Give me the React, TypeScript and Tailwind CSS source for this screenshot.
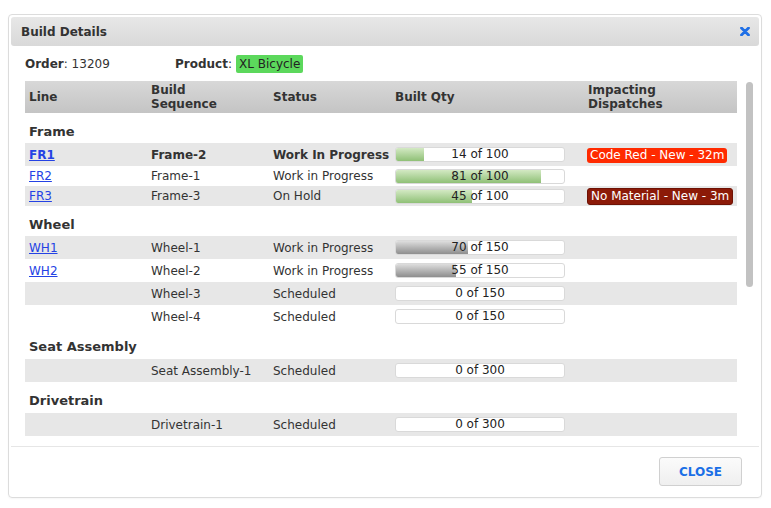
import React from "react";

type Row = {
  line?: string;
  seq: string;
  status: string;
  built: number;
  total: number;
  fill: number;
  tone: "green" | "gray";
  dispatch?: { text: string; kind: "red" | "dark" };
  bold?: boolean;
  h: string;
};

type Group = { name: string; rows: Row[] };

const groups: Group[] = [
  {
    name: "Frame",
    rows: [
      {
        line: "FR1",
        seq: "Frame-2",
        status: "Work In Progress",
        built: 14,
        total: 100,
        fill: 28,
        tone: "green",
        dispatch: { text: "Code Red - New - 32m", kind: "red" },
        bold: true,
        h: "h-[23px]",
      },
      { line: "FR2", seq: "Frame-1", status: "Work in Progress", built: 81, total: 100, fill: 145, tone: "green", h: "h-[20px]" },
      {
        line: "FR3",
        seq: "Frame-3",
        status: "On Hold",
        built: 45,
        total: 100,
        fill: 76,
        tone: "green",
        dispatch: { text: "No Material - New - 3m", kind: "dark" },
        h: "h-[20px]",
      },
    ],
  },
  {
    name: "Wheel",
    rows: [
      { line: "WH1", seq: "Wheel-1", status: "Work in Progress", built: 70, total: 150, fill: 72, tone: "gray", h: "h-[23px]" },
      { line: "WH2", seq: "Wheel-2", status: "Work in Progress", built: 55, total: 150, fill: 60, tone: "gray", h: "h-[23px]" },
      { seq: "Wheel-3", status: "Scheduled", built: 0, total: 150, fill: 0, tone: "gray", h: "h-[23px]" },
      { seq: "Wheel-4", status: "Scheduled", built: 0, total: 150, fill: 0, tone: "gray", h: "h-[23px]" },
    ],
  },
  {
    name: "Seat Assembly",
    rows: [{ seq: "Seat Assembly-1", status: "Scheduled", built: 0, total: 300, fill: 0, tone: "gray", h: "h-[23px]" }],
  },
  {
    name: "Drivetrain",
    rows: [{ seq: "Drivetrain-1", status: "Scheduled", built: 0, total: 300, fill: 0, tone: "gray", h: "h-[23px]" }],
  },
];

const cols = "grid grid-cols-[122px_122px_122px_193px_153px]";

function QtyBar({ row }: { row: Row }) {
  return (
    <div className="relative ml-[4px] h-[15px] w-[170px] overflow-hidden rounded-[3px] border border-[#d9d9d9] bg-white">
      {row.fill > 0 && (
        <div
          className={
            row.tone === "green"
              ? "absolute inset-y-0 left-0 bg-gradient-to-b from-[#d3e9c3] to-[#8fc076]"
              : "absolute inset-y-0 left-0 bg-gradient-to-b from-[#dedede] to-[#8e8e8e]"
          }
          style={{ width: row.fill }}
        />
      )}
      <div className="relative text-center text-[12px] leading-[13px] text-[#222]">
        {row.built} of {row.total}
      </div>
    </div>
  );
}

export default function App() {
  return (
    <div className="min-h-screen bg-white pl-[8px] pt-[14px] font-['DejaVu_Sans',sans-serif] text-[12px] text-[#333]">
      <div className="flex h-[484px] w-[754px] flex-col rounded-[4px] border border-[#dcdcdc] p-[2px] shadow-[0_1px_2px_rgba(0,0,0,0.04)]">
        <div className="flex h-[29px] shrink-0 items-center justify-between rounded-[3px] bg-gradient-to-b from-[#e7e7e7] to-[#d9d9d9] pl-[10px] pr-[9px]">
          <span className="font-bold text-[#333]">Build Details</span>
          <svg width="10" height="9" viewBox="0 0 10 9">
            <path d="M1.5 1 L8.5 8 M8.5 1 L1.5 8" stroke="#1f6fe6" strokeWidth="2.8" strokeLinecap="round" />
          </svg>
        </div>

        <div className="flex h-[35px] shrink-0 items-center pl-[14px]">
          <div className="w-[150px]">
            <b>Order</b>: 13209
          </div>
          <div className="flex items-center">
            <b>Product</b>:
            <span className="ml-[4px] rounded-[2px] bg-[#5cd85c] px-[3px] py-[2px] leading-[14px] text-[#222]">XL Bicycle</span>
          </div>
        </div>

        <div className="flex h-[365px] shrink-0 overflow-hidden pl-[14px]">
          <div className="w-[712px]">
            <div className={`${cols} h-[32px] items-center bg-gradient-to-b from-[#d8d8d8] to-[#c4c4c4] font-bold leading-[14px]`}>
              <div className="pl-[4px]">Line</div>
              <div className="pl-[4px]">
                Build
                <br />
                Sequence
              </div>
              <div className="pl-[4px]">Status</div>
              <div className="pl-[4px]">Built Qty</div>
              <div className="pl-[4px]">
                Impacting
                <br />
                Dispatches
              </div>
            </div>

            {groups.map((g, gi) => (
              <div key={g.name}>
                <div className={`${gi === 0 || gi === 1 ? "h-[30px]" : "h-[31px]"} pl-[4px] pt-[11px] text-[13px] font-bold leading-[16px]`}>
                  {g.name}
                </div>
                {g.rows.map((r, i) => (
                  <div key={r.seq} className={`${cols} ${r.h} items-center ${i % 2 === 0 ? "bg-[#e7e7e7]" : "bg-white"} ${r.bold ? "font-bold" : ""}`}>
                    <div className="pl-[4px]">
                      {r.line && <a className="text-[#2442e4] underline">{r.line}</a>}
                    </div>
                    <div className="pl-[4px]">{r.seq}</div>
                    <div className="whitespace-nowrap pl-[4px]">{r.status}</div>
                    <div className="font-normal">
                      <QtyBar row={r} />
                    </div>
                    <div className="pl-[3px] font-normal">
                      {r.dispatch && (
                        <span
                          className={`inline-block rounded-[3px] px-[3px] leading-[15px] text-white ${
                            r.dispatch.kind === "red" ? "bg-[#ff2a00]" : "border border-[#6e1205] bg-[#8c1a08]"
                          }`}
                        >
                          {r.dispatch.text}
                        </span>
                      )}
                    </div>
                  </div>
                ))}
              </div>
            ))}
          </div>
          <div className="ml-[9px] pt-[1px]">
            <div className="h-[205px] w-[7px] rounded-full bg-[#c2c2c2]" />
          </div>
        </div>

        <div className="flex shrink-0 justify-end border-t border-[#e6e6e6] pb-[9px] pr-[17px] pt-[10px]">
          <button className="h-[29px] w-[83px] rounded-[3px] border border-[#d0d0d0] bg-gradient-to-b from-[#fbfbfb] to-[#efefef] font-bold text-[#1a6fe6]">
            CLOSE
          </button>
        </div>
      </div>
    </div>
  );
}
